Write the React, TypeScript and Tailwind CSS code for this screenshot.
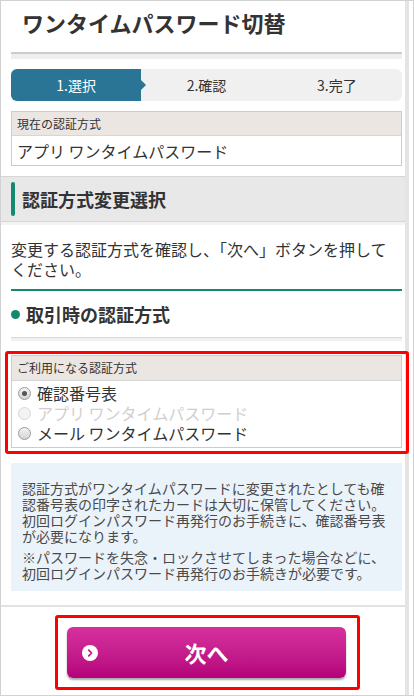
const radios = [
  { label: "確認番号表", checked: true, disabled: false },
  { label: "アプリ ワンタイムパスワード", checked: false, disabled: true },
  { label: "メール ワンタイムパスワード", checked: false, disabled: false },
];

function Radio({ checked, disabled }: { checked: boolean; disabled: boolean }) {
  return (
    <span
      className={
        disabled
          ? "w-[13px] h-[13px] rounded-full border border-[#d6d6d6] bg-[#f3f3f3] shrink-0"
          : "w-[13px] h-[13px] rounded-full border border-[#9a9a9a] bg-gradient-to-b from-[#f4f4f4] to-[#d4d4d4] shrink-0 flex items-center justify-center"
      }
    >
      {checked && <span className="w-[5px] h-[5px] rounded-full bg-[#555]" />}
    </span>
  );
}

export default function App() {
  return (
    <div
      className="w-[414px] h-[696px] overflow-hidden bg-white flex border border-[#d2d2d2] text-[#333]"
      style={{ fontFamily: '"Noto Sans CJK JP", "Noto Sans", sans-serif' }}
    >
      <div className="w-[404px] shrink-0 flex flex-col">
        {/* Title */}
        <div className="h-[51px] pt-[7px] pl-[21px]">
          <h1 className="text-[22px] leading-[28px] font-bold text-[#333]">
            ワンタイムパスワード切替
          </h1>
        </div>
        <div className="ml-[10px] mr-[3px]">
          <div className="h-[2px] bg-[#cccccc]" />
          <div className="h-[5px] bg-[#eeeeee]" />
        </div>

        {/* Steps */}
        <div className="ml-[10px] mr-[3px] mt-[10px] h-[32px] rounded-[6px] bg-[#f0f0f0] flex text-[14px]">
          <div className="relative flex-1 rounded-l-[6px] bg-[#2a7595] text-white flex items-center justify-center">
            1.選択
            <span className="absolute right-[-5px] top-1/2 -translate-y-1/2 border-y-[5px] border-y-transparent border-l-[5px] border-l-[#2a7595]" />
          </div>
          <div className="flex-1 flex items-center justify-center">2.確認</div>
          <div className="flex-1 flex items-center justify-center">3.完了</div>
        </div>

        {/* Current method */}
        <div className="ml-[10px] mr-[3px] mt-[10px] border border-[#cccccc]">
          <div className="h-[24px] bg-[#ece6e2] border-b border-[#d6d6d6] pl-[5px] flex items-center text-[12px]">
            現在の認証方式
          </div>
          <div className="h-[29px] pl-[5px] flex items-center text-[16px]">
            アプリ ワンタイムパスワード
          </div>
        </div>

        {/* Section heading */}
        <div className="mt-[10px] h-[46px] bg-[#e8e8e8] border-y border-[#d6d6d6] flex items-center">
          <span className="ml-[10px] w-[4px] h-[34px] rounded-[2px] bg-[#15896f]" />
          <h2 className="ml-[7px] text-[18px] font-bold">認証方式変更選択</h2>
        </div>
        <div className="h-[3px] bg-[#f3f3f3]" />

        <p className="mt-[14px] ml-[10px] mr-[3px] text-[16px] leading-[20px]">
          変更する認証方式を確認し、「次へ」ボタンを押して
          <br />
          ください。
        </p>

        <div className="ml-[10px] mr-[3px] mt-[10px] h-[2px] bg-[#15896f]" />
        <div className="ml-[10px] mr-[3px] h-[46px] flex items-center gap-[6px]">
          <span className="w-[9px] h-[9px] rounded-full bg-[#15896f]" />
          <h3 className="text-[18px] font-bold">取引時の認証方式</h3>
        </div>
        <div className="ml-[10px] mr-[3px]">
          <div className="h-[1px] bg-[#d9d9d9]" />
          <div className="h-[3px] bg-[#f0f0f0]" />
        </div>

        {/* Selection (highlighted) */}
        <div className="relative z-10 mt-[10px] ml-[4px] w-[404px] border-[3px] border-[#ff0000] rounded-[3px] pt-[1px] pb-[3px] pl-[3px] pr-[4px]">
          <div className="border border-[#cccccc]">
            <div className="h-[25px] bg-[#ece6e2] border-b border-[#d6d6d6] pl-[5px] flex items-center text-[12px]">
              ご利用になる認証方式
            </div>
            <div className="pt-[2px] pb-[4px]">
              {radios.map((r) => (
                <label
                  key={r.label}
                  className={
                    r.disabled
                      ? "h-[20px] pl-[6px] flex items-center gap-[6px] text-[16px] text-[#cfcfcf]"
                      : "h-[20px] pl-[6px] flex items-center gap-[6px] text-[16px] text-[#333]"
                  }
                >
                  <Radio checked={r.checked} disabled={r.disabled} />
                  <span>{r.label}</span>
                </label>
              ))}
            </div>
          </div>
        </div>

        {/* Notice */}
        <div className="ml-[10px] mr-[3px] mt-[9px] bg-[#eaf3fa] pt-[17px] pb-[10px] px-[11px] text-[14px] leading-[16px] text-[#4a4a4a]">
          <p>
            認証方式がワンタイムパスワードに変更されたとしても確
            <br />
            認番号表の印字されたカードは大切に保管してください。
            <br />
            初回ログインパスワード再発行のお手続きに、確認番号表
            <br />
            が必要になります。
          </p>
          <p className="mt-[5px]">
            ※パスワードを失念・ロックさせてしまった場合などに、
            <br />
            初回ログインパスワード再発行のお手続きが必要です。
          </p>
        </div>

        <div className="mt-[14px] h-[2px] bg-[#e2e2e2]" />

        {/* Next button (highlighted) */}
        <div className="mt-[8px] ml-[54px] w-[305px] border-[3px] border-[#ff0000] rounded-[3px] p-[9px]">
          <button className="relative w-[279px] h-[51px] rounded-[6px] bg-gradient-to-b from-[#d6309f] to-[#b5007b] shadow-[0_2px_2px_rgba(0,0,0,0.35)] flex items-center justify-center text-white text-[22px] font-bold">
            <span className="absolute left-[15px] top-1/2 -translate-y-1/2 w-[16px] h-[16px] rounded-full bg-white flex items-center justify-center">
              <svg viewBox="0 0 16 16" className="w-[10px] h-[10px]">
                <path
                  d="M6 3.5 L10.5 8 L6 12.5"
                  fill="none"
                  stroke="#c0107f"
                  strokeWidth="2.6"
                  strokeLinecap="round"
                  strokeLinejoin="round"
                />
              </svg>
            </span>
            次へ
          </button>
        </div>
      </div>
      <div className="w-[4px] shrink-0 bg-[#e4e4e4]" />
      <div className="flex-1" />
    </div>
  );
}
